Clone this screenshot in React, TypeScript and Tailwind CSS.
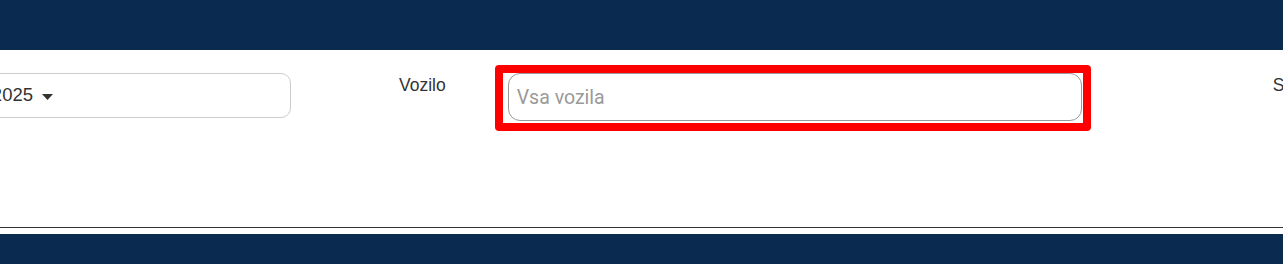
import React from 'react';

const font = { fontFamily: '"Liberation Sans", Arial, sans-serif' };

const App: React.FC = () => {
  return (
    <div className="w-[1283px] h-[264px] bg-white overflow-hidden" style={font}>
      {/* top bar */}
      <div className="h-[50px] bg-[#0b2a50]" />

      {/* filters */}
      <div className="h-[178px] border-b border-[#333] overflow-hidden">
        <div className="flex items-start ml-[-160px] w-max">
          <div className="shrink-0 mt-[23px] w-[451px] h-[45px] border border-[#ccc] rounded-[10px] flex items-center justify-end pr-[237px]">
            <span className="text-[18.5px] text-[#333] leading-none">2025</span>
            <svg width="11" height="6" viewBox="0 0 11 6" className="ml-[9px] mt-[2px]">
              <path d="M0 0 L11 0 L5.5 6 Z" fill="#333" />
            </svg>
          </div>

          <label className="shrink-0 ml-[108px] mt-[25px] text-[17.5px] leading-[20px] text-[#333] whitespace-nowrap">
            Vozilo
          </label>

          <div className="shrink-0 ml-[49px] mt-[15px] border-8 border-[#ff0000] rounded-[4px] pl-[5px] pr-[1px] pb-[2px]">
            <input
              type="text"
              placeholder="Vsa vozila"
              className="w-[574px] h-[48px] border border-[#999] rounded-[12px] pl-[8px] text-[19.5px] text-[#333] placeholder:text-[#9a9a9a] outline-none"
              style={{ fontFamily: 'Roboto, "Liberation Sans", sans-serif' }}
            />
          </div>

          <label className="shrink-0 ml-[182px] mt-[25px] text-[17.5px] leading-[20px] text-[#333] whitespace-nowrap">
            Status
          </label>
        </div>
      </div>

      {/* footer bar */}
      <div className="mt-[6px] h-[30px] bg-[#0b2a50]" />
    </div>
  );
};

export default App;
